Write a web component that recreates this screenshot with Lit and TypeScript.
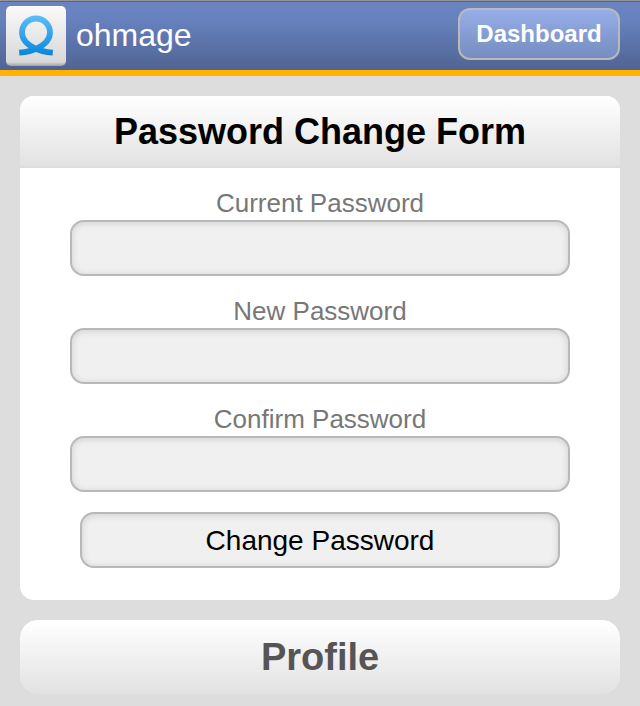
import { LitElement, html, css } from "lit";
import { customElement } from "lit/decorators.js";

@customElement("app-root")
export class AppRoot extends LitElement {
  static styles = css`
    :host {
      display: block;
      min-height: 706px;
      box-sizing: border-box;
      background: #ddd;
      font-family: "Liberation Sans", Arial, Helvetica, sans-serif;
    }
    * {
      box-sizing: border-box;
    }
    .bar {
      display: flex;
      align-items: flex-start;
      height: 76px;
      padding: 4px 20px 0 6px;
      border-top: 1px solid #92959c;
      border-bottom: 6px solid #ffb300;
      background: linear-gradient(#566284 0, #566284 1px, #6a84c0 1px, #6681be 28%, #506492 100%);
    }
    .logo {
      width: 60px;
      height: 60px;
      margin-top: 1px;
      flex: none;
    }
    .brand {
      flex: 1;
      margin-left: 10px;
      color: #fff;
      font-size: 32px;
      line-height: 36px;
      padding-top: 12px;
    }
    .dash {
      width: 162px;
      height: 52px;
      margin-top: 3px;
      padding: 0;
      border: 2px solid #b9b9b9;
      border-radius: 12px;
      background: linear-gradient(#97ade8, #758dbf);
      color: #fff;
      font: bold 24px/48px "Liberation Sans", Arial, sans-serif;
      text-align: center;
    }
    .content {
      display: flex;
      flex-direction: column;
      gap: 20px;
      padding: 20px 20px 0;
    }
    .card {
      height: 504px;
      border-radius: 14px;
      background: #fff;
      overflow: hidden;
    }
    .title {
      height: 72px;
      margin: 0;
      border-bottom: 2px solid #ddd;
      background: linear-gradient(#fff, #e2e2e2);
      font-size: 36px;
      line-height: 72px;
      text-align: center;
      color: #000;
    }
    form {
      display: flex;
      flex-direction: column;
      align-items: center;
      padding-top: 20px;
    }
    label {
      display: flex;
      flex-direction: column;
      align-items: center;
      height: 108px;
      color: #777;
      font-size: 26px;
      line-height: 30px;
    }
    input {
      margin: 2px 0 0;
    }
    input,
    .submit {
      width: 500px;
      height: 56px;
      border: 2px solid #b8b8b8;
      border-radius: 14px;
      background: #f0f0f0;
      box-shadow: inset 0 1px 7px rgba(0, 0, 0, 0.14);
      outline: none;
      padding: 0 12px;
    }
    .submit {
      width: 480px;
      padding-top: 2px;
      color: #000;
      font: 28px/50px "Liberation Sans", Arial, sans-serif;
    }
    .profile {
      height: 74px;
      border-radius: 18px;
      background: linear-gradient(#fff, #e2e2e2);
      color: #555;
      font-size: 38px;
      font-weight: bold;
      line-height: 75px;
      text-align: center;
    }
  `;

  render() {
    const fields = ["Current Password", "New Password", "Confirm Password"];
    return html`
      <header class="bar">
        <svg class="logo" viewBox="0 0 60 60">
          <defs>
            <linearGradient id="tile" x1="0" y1="0" x2="0" y2="1">
              <stop offset="0" stop-color="#fafafa" />
              <stop offset=".93" stop-color="#d8d8d8" />
              <stop offset="1" stop-color="#a2a3a6" />
            </linearGradient>
            <linearGradient id="ribbon" gradientUnits="userSpaceOnUse" x1="0" y1="10" x2="0" y2="50">
              <stop offset="0" stop-color="#5bbdf7" />
              <stop offset="1" stop-color="#0785dc" />
            </linearGradient>
          </defs>
          <rect width="60" height="60" rx="5" fill="url(#tile)" />
          <path
            d="M13.2 46.7C20 46.2 26 45 31.5 42.2C39 38.4 44 33 44 26.5A14 14 0 0 0 16 26.5C16 33 21 38.4 28.5 42.2C34 45 40 46.2 46.8 46.7"
            fill="none"
            stroke="url(#ribbon)"
            stroke-width="5.8"
          />
        </svg>
        <div class="brand">ohmage</div>
        <button class="dash">Dashboard</button>
      </header>
      <main class="content">
        <section class="card">
          <h1 class="title">Password Change Form</h1>
          <form>
            ${fields.map((f) => html`<label>${f}<input type="password" /></label>`)}
            <button class="submit" type="button">Change Password</button>
          </form>
        </section>
        <div class="profile">Profile</div>
      </main>
    `;
  }
}
